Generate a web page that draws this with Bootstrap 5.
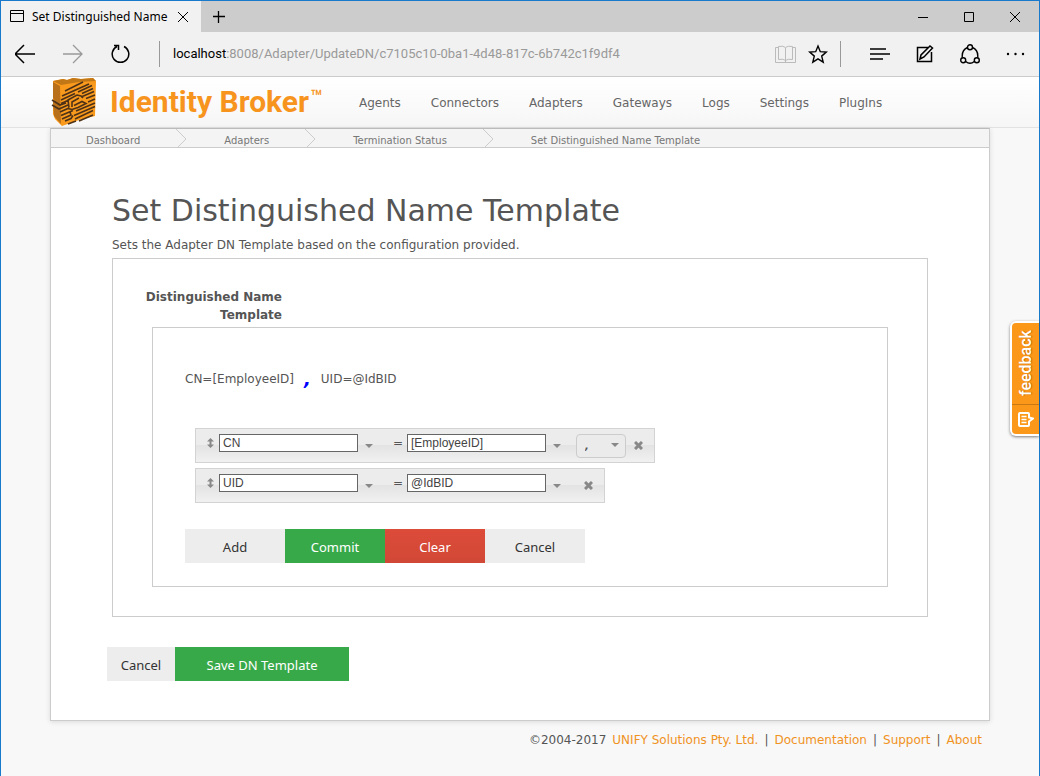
<!DOCTYPE html>
<html lang="en">
<head>
<meta charset="utf-8">
<meta name="viewport" content="width=device-width, initial-scale=1">
<title>Set Distinguished Name Template</title>
<link rel="stylesheet" href="https://cdn.jsdelivr.net/npm/bootstrap@5.3.0/dist/css/bootstrap.min.css">
<style>
body { font: 12px/18px "DejaVu Sans", Verdana, sans-serif; color: #555; background: #f8f8f8; }
.browser { border: 1px solid #1979ca; }
.segoe { font-family: "Noto Sans", "Segoe UI", sans-serif; }
svg { display: block; fill: none; stroke: #000; }
.titlebar { height: 31px; background: #ccc; }
.page-tab { width: 200px; background: #f1f1f1; color: #000; font-size: 12px; padding: 0 12px 0 8px; }
.window-keys { column-gap: 34px; padding-right: 18px; }
.plain { background: none; border: 0; padding: 0; }
.toolbar { height: 45px; background: #f1f1f1; border-bottom: 1px solid #ccc; padding: 0 14px; }
.history { column-gap: 28px; }
.tools { column-gap: 26px; }
.vline { width: 1px; height: 26px; background: #999; }
.address { color: #000; font: 13px/20px Roboto, "Segoe UI", sans-serif; padding-left: 13px; }
.address span { color: #999; }
.site-head { height: 51px; background: linear-gradient(#fff, #f6f6f6); border-bottom: 1px solid #e2e2e2; }
.shell { max-width: 940px; }
.brand { color: #f7941e; font: bold 30px/34px Roboto, sans-serif; text-decoration: none; width: 309px; }
.brand sup { font: 500 20px/0 Roboto, sans-serif; top: -8px; margin-left: 1px; }
.menu { column-gap: 30px; padding-top: 2px; }
.menu a { color: #666; text-decoration: none; }
.sheet { background: #fff; border: 1px solid #ccc; border-top-color: #bbb; box-shadow: 0 1px 5px rgba(0,0,0,.12); }
.trail { height: 19px; background: #f4f4f4; border-bottom: 1px solid #ccc; font-size: 10px; line-height: 23px; }
.trail a { color: #777; text-decoration: none; padding: 0 36px 0 35px; }
.trail svg { stroke: #ccc; }
.content { padding: 42px 61px 39px; }
h1 { font-size: 30px; line-height: 42px; font-weight: 400; margin: 0 0 4px; }
.frame { border: 1px solid #ccc; }
.outer { margin-top: 4px; padding: 29px 39px 29px; }
.inner { padding: 42px 32px 23px; margin-top: 3px; }
.field-label { width: 140px; margin-left: -10px; font-weight: 700; text-align: right; display: block; }
.formula { column-gap: 10px; }
.comma { color: #00f; font-size: 18px; font-weight: 700; font-style: italic; line-height: 18px; }
.dn-list { margin: 40px 0 26px 10px; row-gap: 5px; }
.dn-row { height: 35px; border: 1px solid #d3d3d3; background: linear-gradient(#ececec 0 50%, #e3e3e3 50%, #f1f1f1); width: max-content; padding: 0 11px 0 10px; }
.dn-row svg { fill: #888; stroke: none; }
.dn-row .cross { stroke: #888; }
.dn-row .grip, .dn-row input, .equal { margin-top: -6px; }
.dn-row input { width: 139px; height: 18px; border: 1px solid #666; border-radius: 0; padding: 0 3px; background: #fff; color: #444; font: 12px/16px "Liberation Sans", Arial, sans-serif; }
.pick { width: 22px; height: 20px; display: flex; align-items: center; justify-content: center; }
.equal { width: 27px; padding-left: 13px; }
.delimiter { position: relative; width: 50px; height: 24px; margin-left: 8px; }
.delimiter select { appearance: none; width: 50px; height: 24px; border: 1px solid #ccc; border-radius: 4px; background: #ebebeb; color: #555; padding: 0 8px; font: italic bold 10px/20px "DejaVu Sans", Verdana, sans-serif; }
.delimiter svg { position: absolute; right: 7px; top: 9px; pointer-events: none; }
.act { border: 0; border-radius: 0; height: 34px; padding: 2px 0 0; background: #ededed; color: #333; font: 13px/20px "Noto Sans", "Segoe UI", sans-serif; width: 100px; }
.act.go { background: #38a948; color: #fff; }
.act.stop { background: linear-gradient(#dd4b39, #d14836); color: #fff; }
.act.slim { width: 68px; }
.act.wide { width: 174px; }
.finish { margin: 30px 0 0 -5px; }
.foot { padding: 10px 8px 27px; column-gap: 6px; }
.foot a { color: #f0921e; text-decoration: none; }
.feedback { position: absolute; right: 0; top: 320px; width: 29px; height: 115px; background: #fc9819; border: 2px solid #fff; border-right: 0; border-radius: 6px 0 0 6px; box-shadow: 0 1px 3px rgba(0,0,0,.5); padding: 0; color: #fff; display: flex; flex-direction: column; align-items: center; }
.feedback span { writing-mode: vertical-rl; transform: rotate(180deg); font: 500 16px/25px Roboto, sans-serif; height: 81px; text-shadow: 0 1px 1px #b86500; }
.feedback i { border-top: 1px solid #c97812; width: 100%; height: 30px; display: flex; align-items: center; justify-content: center; }
.feedback svg { stroke: #fff; }
</style>
</head>
<body>
<div class="browser min-vh-100 position-relative">
  <div class="titlebar d-flex segoe">
    <div class="page-tab d-flex align-items-center">
      <svg width="15" height="13" viewBox="0 0 15 13"><path d="M1.500.5h13v11h-13zM1.500 3.500h13"/></svg>
      <span class="ms-2 text-nowrap">Set Distinguished Name</span>
      <button class="plain ms-auto" aria-label="Close tab"><svg width="12" height="12"><path d="M1 1l10 10M11 1L1 11"/></svg></button>
    </div>
    <button class="plain ms-2 ps-1" aria-label="New tab"><svg width="12" height="12" stroke-width="1.300"><path d="M5.500 0v12M0 5.500h12"/></svg></button>
    <div class="window-keys ms-auto d-flex align-items-center">
      <button class="plain" aria-label="Minimize"><svg width="12" height="12"><path d="M1 6.500h10"/></svg></button>
      <button class="plain" aria-label="Maximize"><svg width="12" height="12"><path d="M1.500 1.500h9v9h-9z"/></svg></button>
      <button class="plain" aria-label="Close"><svg width="12" height="12"><path d="M1 1l10 10M11 1L1 11"/></svg></button>
    </div>
  </div>
  <div class="toolbar d-flex align-items-center">
    <div class="history d-flex align-items-center">
      <button class="plain" aria-label="Back"><svg width="20" height="20" viewBox="2 0 20 20" stroke-width="1.500"><path d="M22 10H2M11 1L2 10l9 9"/></svg></button>
      <button class="plain" aria-label="Forward"><svg width="20" height="20" style="stroke:#999" stroke-width="1.300"><path d="M0 10h19M10 1l9 9-9 9"/></svg></button>
      <button class="plain" aria-label="Refresh"><svg width="20" height="20" stroke-width="1.500"><path d="M13 2.500a8.300 8.300 0 1 1-7 0M3 1.500h4.500v4.500"/></svg></button>
      <div class="vline"></div>
    </div>
    <div class="address text-nowrap">localhost<span>:8008/Adapter/UpdateDN/c7105c10-0ba1-4d48-817c-6b742c1f9df4</span></div>
    <div class="ms-auto d-flex align-items-center">
      <button class="plain me-2" aria-label="Reading view"><svg width="21" height="19" style="stroke:#bbb"><path d="M3.500 2.500h-3v15h20v-15h-3M10.500 3v14M3.500 1.500q5-1 7 1q2-2 7-1v13q-5-1-7 1q-2-2-7-1z"/></svg></button>
      <button class="plain ms-1 me-1" aria-label="Favourites"><svg width="20" height="20" stroke-width="1.400"><path d="M10 2l2.300 5.700 6 .4-4.600 4 1.500 6L10 14.800 4.800 18.100l1.500-6-4.600-4 6-.4z"/></svg></button>
      <div class="vline ms-2 me-4"></div>
      <div class="tools d-flex align-items-center ms-1">
        <button class="plain" aria-label="Hub"><svg width="21" height="14" stroke-width="1.300"><path d="M1 2h16M1 7h20M1 12h13"/></svg></button>
        <button class="plain" aria-label="Web note"><svg width="18" height="18" stroke-width="1.500"><path d="M12 2.500H1.500v14h14V7M4 14l1-4L14 1l2.500 2L8 12z"/></svg></button>
        <button class="plain" aria-label="Share"><svg width="20" height="20" stroke-width="1.400"><circle cx="10" cy="3.300" r="2.500"/><circle cx="3.200" cy="16.200" r="2.500"/><circle cx="16.800" cy="16.200" r="2.500"/><path d="M7.500 3.500Q1.500 6 2.300 13.600M12.500 3.500Q18.500 6 17.700 13.600M5.700 17.500Q10 21 14.300 17.500"/></svg></button>
        <button class="plain" aria-label="More"><svg width="19" height="4" style="fill:#000;stroke:none"><circle cx="2" cy="2" r="1.200"/><circle cx="9.500" cy="2" r="1.200"/><circle cx="17" cy="2" r="1.200"/></svg></button>
      </div>
    </div>
  </div>

  <header class="site-head">
    <div class="shell mx-auto d-flex align-items-center h-100">
      <a class="brand d-flex align-items-center text-nowrap flex-shrink-0" href="#">
        <svg width="48" height="49" viewBox="-2 0 48 49" style="stroke:none">
          <path fill="#fa9a1c" d="M1 3L11 1l4 1 6-2 8 1 12-1 3 3-1 35-16 4-17 6-7-7L1 36z"/>
          <path fill="#b8701a" d="M1 4l7 4 1 38-7-8-1-14 2-1-2-3z"/>
          <path fill="#c27716" d="M1 3L11 1l4 1 6-2 8 1 12-1 3 3-17 1-18 3z"/>
          <path stroke="#4d3218" stroke-width="1.600" fill="none" d="M13 13L31 4M10 18L37 6M9 22L23 15.500M26 14L40 7.500M9 25.500L17 22M30 15.500L41 10.500M0 22l8 5 6-2M0 27l7 4 9-4M29 19L42 13.500M8 34l9-4M34 20.500L43 17M17 29.500l-1-7.500 9-5 4 1 2 2M20 29v-5l7-4M22 27.500l8-4 4 2-8 4-6 2-4-1M36 24l7-3M9 37.500l12-5M24 33l19-8M10 41l9-4-1-3M22 37.500L43 28.500M13 43l6-2.500 2-3M23 41L41 32.500M16 46l8-3M27 43l14-6"/>
        </svg>
        <span class="ms-2 ps-1">Identity Broker<sup>™</sup></span>
      </a>
      <nav class="menu d-flex" aria-label="Main">
        <a href="#">Agents</a><a href="#">Connectors</a><a href="#">Adapters</a><a href="#">Gateways</a><a href="#">Logs</a><a href="#">Settings</a><a href="#">PlugIns</a>
      </nav>
    </div>
  </header>

  <main class="shell sheet mx-auto">
    <nav class="trail d-flex" aria-label="Breadcrumb">
      <a href="#">Dashboard</a>
      <svg width="13" height="18"><path d="M0 0l10 10-8 8"/></svg>
      <a href="#">Adapters</a>
      <svg width="13" height="18"><path d="M0 0l10 10-8 8"/></svg>
      <a href="#">Termination Status</a>
      <svg width="13" height="18"><path d="M0 0l10 10-8 8"/></svg>
      <a href="#">Set Distinguished Name Template</a>
    </nav>
    <div class="content">
      <h1>Set Distinguished Name Template</h1>
      <div>Sets the Adapter DN Template based on the configuration provided.</div>
      <section class="frame outer">
        <label class="field-label" for="attr1">Distinguished Name Template</label>
        <div class="frame inner">
          <div class="formula d-flex"><span>CN=[EmployeeID]</span><span class="comma">,</span><span>UID=@IdBID</span></div>
          <div class="dn-list d-grid">
            <div class="dn-row d-flex align-items-center">
              <svg class="grip me-1" width="9" height="10"><path d="M4.500 0L8 3.500H5.500v3H8L4.500 10 1 6.500h2.500v-3H1z"/></svg>
              <input id="attr1" type="text" value="CN">
              <button class="plain pick" aria-label="Choose attribute"><svg width="8" height="4"><path d="M0 0h8L4 4z"/></svg></button>
              <span class="equal">=</span>
              <input type="text" value="[EmployeeID]" aria-label="Value">
              <button class="plain pick" aria-label="Choose value"><svg width="8" height="4"><path d="M0 0h8L4 4z"/></svg></button>
              <span class="delimiter"><select aria-label="Delimiter"><option>,</option></select><svg width="8" height="4"><path d="M0 0h8L4 4z"/></svg></span>
              <button class="plain ms-2" aria-label="Remove"><svg class="cross" width="9" height="9" stroke-width="3"><path d="M1 1l7 7M8 1L1 8"/></svg></button>
            </div>
            <div class="dn-row d-flex align-items-center">
              <svg class="grip me-1" width="9" height="10"><path d="M4.500 0L8 3.500H5.500v3H8L4.500 10 1 6.500h2.500v-3H1z"/></svg>
              <input type="text" value="UID" aria-label="Attribute">
              <button class="plain pick" aria-label="Choose attribute"><svg width="8" height="4"><path d="M0 0h8L4 4z"/></svg></button>
              <span class="equal">=</span>
              <input type="text" value="@IdBID" aria-label="Value">
              <button class="plain pick" aria-label="Choose value"><svg width="8" height="4"><path d="M0 0h8L4 4z"/></svg></button>
              <button class="plain ms-3" aria-label="Remove"><svg class="cross" width="9" height="9" stroke-width="3"><path d="M1 1l7 7M8 1L1 8"/></svg></button>
            </div>
          </div>
          <div class="d-flex"><button class="act">Add</button><button class="act go">Commit</button><button class="act stop">Clear</button><button class="act">Cancel</button></div>
        </div>
      </section>
      <div class="finish d-flex"><button class="act slim">Cancel</button><button class="act go wide">Save DN Template</button></div>
    </div>
  </main>
  <footer class="shell mx-auto foot d-flex justify-content-end"><span>©2004-2017</span><a href="#">UNIFY Solutions Pty. Ltd.</a><span>|</span><a href="#">Documentation</a><span>|</span><a href="#">Support</a><span>|</span><a href="#">About</a></footer>

  <button class="feedback"><span>feedback</span><i><svg width="17" height="17" stroke-width="2"><path d="M3 2h8q1 0 1 1v3.500l4 1-4 3V14q0 1-1 1H3q-1 0-1-1V3q0-1 1-1z"/><path stroke-width="1.300" d="M4.500 5.500h5M4.500 8.500h5M4.500 11.500h5"/></svg></i></button>
</div>
<script src="https://cdn.jsdelivr.net/npm/bootstrap@5.3.0/dist/js/bootstrap.bundle.min.js"></script>
</body>
</html>
